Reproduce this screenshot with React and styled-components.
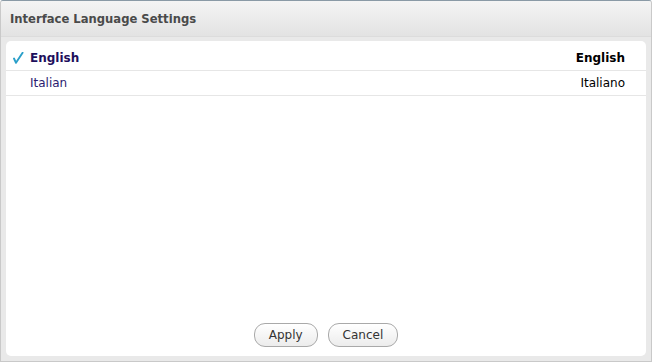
import React from "react"
import styled, { createGlobalStyle } from "styled-components"

const Global = createGlobalStyle`
  html, body {
    margin: 0;
    padding: 0;
    background: #ffffff;
  }
  body {
    font-family: "DejaVu Sans", Verdana, sans-serif;
  }
`

const Dialog = styled.div`
  width: 652px;
  height: 362px;
  box-sizing: border-box;
  display: flex;
  flex-direction: column;
  background: #e9e9e9;
  border: 1px solid #c9c9c9;
  border-top-color: #8a9aa6;
  border-radius: 3px 3px 0 0;
  overflow: hidden;
`

const Header = styled.div`
  height: 35px;
  flex-shrink: 0;
  display: flex;
  align-items: center;
  padding: 0 9px;
  background: linear-gradient(#f4f4f4, #e3e3e3);
  border-bottom: 1px solid #dcdcdc;
`

const Title = styled.h1`
  margin: 0;
  font-size: 11.6px;
  font-weight: bold;
  color: #4a4a4a;
`

const Body = styled.div`
  flex: 1;
  display: flex;
  padding: 4px 5px 5px 5px;
`

const Panel = styled.div`
  flex: 1;
  display: flex;
  flex-direction: column;
  background: #ffffff;
  border-radius: 5px;
  padding-top: 5px;
`

const List = styled.ul`
  list-style: none;
  margin: 0;
  padding: 0;
  flex: 1;
`

const Row = styled.li`
  display: flex;
  align-items: center;
  height: 24px;
  padding: 0 21px 0 7px;
  border-bottom: 1px solid #e6e6e6;
  font-size: 12px;
  font-weight: ${p => (p.$active ? "bold" : "normal")};
`

const Check = styled.span`
  width: 17px;
  height: 12px;
  display: flex;
  align-items: center;
`

const Name = styled.span`
  flex: 1;
  color: ${p => (p.$active ? "#1e0f5c" : "#2b1b70")};
`

const Native = styled.span`
  color: #000000;
`

const Footer = styled.div`
  display: flex;
  justify-content: center;
  gap: 10px;
  padding-bottom: 9px;
`

const Button = styled.button`
  height: 24px;
  padding: 0 14px;
  border: 1px solid #a9a9a9;
  border-radius: 11px;
  background: linear-gradient(#ffffff, #ececec);
  font-family: "DejaVu Sans", Verdana, sans-serif;
  font-size: 12px;
  color: #333333;
`

const CheckIcon = () => (
  <svg width="11" height="12" viewBox="0 0 11 12">
    <path
      d="M1 6.5 L3 10.8 L9.6 0.8"
      fill="none"
      stroke="#2a9fc9"
      strokeWidth="1.9"
      strokeLinecap="round"
      strokeLinejoin="round"
    />
  </svg>
)

const languages = [
  { name: "English", native: "English", active: true },
  { name: "Italian", native: "Italiano" },
]

export default function App() {
  return (
    <>
      <Global />
      <Dialog>
        <Header>
          <Title>Interface Language Settings</Title>
        </Header>
        <Body>
          <Panel>
            <List>
              {languages.map(l => (
                <Row key={l.name} $active={l.active}>
                  <Check>{l.active && <CheckIcon />}</Check>
                  <Name $active={l.active}>{l.name}</Name>
                  <Native>{l.native}</Native>
                </Row>
              ))}
            </List>
            <Footer>
              <Button>Apply</Button>
              <Button>Cancel</Button>
            </Footer>
          </Panel>
        </Body>
      </Dialog>
    </>
  )
}
